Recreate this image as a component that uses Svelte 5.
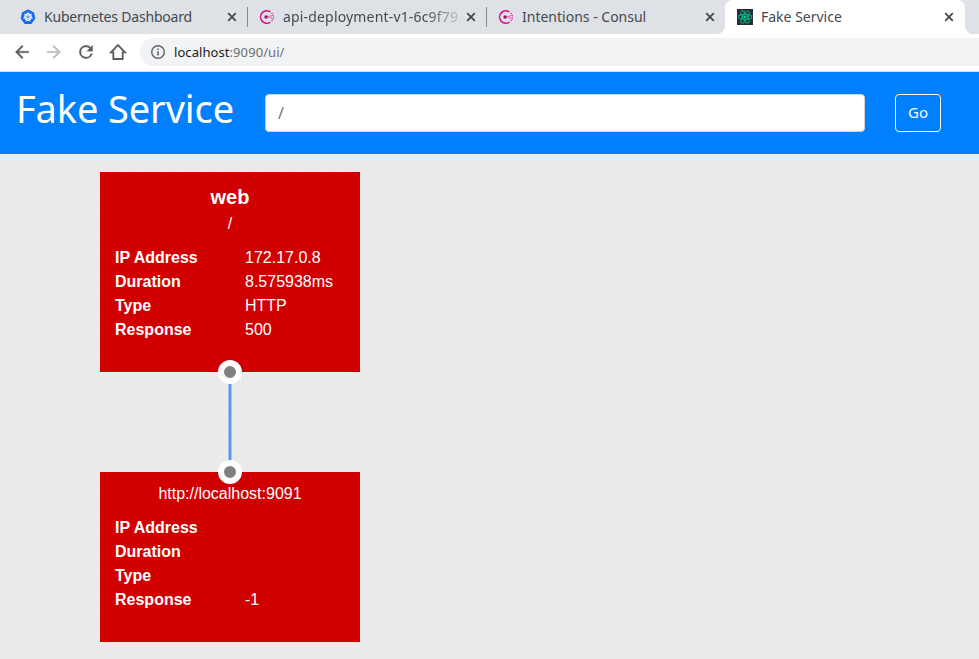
<script>
  const tabs = [
    { title: 'Kubernetes Dashboard', icon: 'kube', spacing: -0.2 },
    { title: 'api-deployment-v1-6c9f79', icon: 'consul', spacing: 0.17, fade: true },
    { title: 'Intentions - Consul', icon: 'consul', spacing: 0 },
    { title: 'Fake Service', icon: 'react', spacing: 0, active: true }
  ];
  const nodes = [
    {
      x: 100, y: 18, height: 200, name: 'web', uri: '/', port: 'bottom',
      rows: [['IP Address', '172.17.0.8'], ['Duration', '8.575938ms'], ['Type', 'HTTP'], ['Response', '500']]
    },
    {
      x: 100, y: 318, height: 170, name: '', uri: 'http://localhost:9091', port: 'top',
      rows: [['IP Address', ''], ['Duration', ''], ['Type', ''], ['Response', '-1']]
    }
  ];
  const spokes = [0, 1, 2, 3, 4, 5, 6].map((i) => (i * 360) / 7);
</script>

<div class="window">
  <div class="tabs">
    {#each tabs as tab}
      <div class="tab" class:active={tab.active}>
        {#if tab.icon === 'kube'}
          <svg class="fav" viewBox="0 0 16 16">
            <path d="M8 1.1 13.4 3.7 14.7 9.4 11 14.3H5L1.3 9.4 2.6 3.7Z" fill="#1769f0" stroke="#1769f0" stroke-width="1.2" stroke-linejoin="round" />
            <circle cx="8" cy="8" r="3.4" fill="#8db5f5" stroke="#fff" stroke-width="1" />
            {#each spokes as a}
              <path d="M8 7.2V3" stroke="#fff" stroke-width=".7" transform="rotate({a} 8 8)" />
            {/each}
            <circle cx="8" cy="8" r=".8" fill="#1769f0" />
          </svg>
        {:else if tab.icon === 'consul'}
          <svg class="fav" viewBox="0.7 0 16 16">
            <path d="M12 13.1A6.2 6.2 0 1 1 12 2.9" fill="none" stroke="#df0f87" stroke-width="1.6" />
            <circle cx="7.8" cy="8" r="1.8" fill="#a0145c" />
            <g fill="#df0f87">
              <circle cx="10.8" cy="8" r=".8" /><circle cx="12.8" cy="6.9" r=".7" /><circle cx="12.8" cy="9.1" r=".7" />
              <circle cx="14.8" cy="6.4" r=".7" /><circle cx="15.1" cy="8" r=".6" /><circle cx="14.8" cy="9.7" r=".7" />
              <circle cx="13.8" cy="4.5" r=".7" /><circle cx="13.8" cy="11.6" r=".7" />
            </g>
          </svg>
        {:else}
          <svg class="fav" viewBox="0 0 16 16">
            <path d="M0 0H16V16H0Z" fill="#282c34" />
            <g fill="none" stroke="#05ab83" stroke-width="1.1">
              <ellipse cx="8" cy="8" rx="6.8" ry="2.6" />
              <ellipse cx="8" cy="8" rx="6.8" ry="2.6" transform="rotate(60 8 8)" />
              <ellipse cx="8" cy="8" rx="6.8" ry="2.6" transform="rotate(120 8 8)" />
            </g>
            <circle cx="8" cy="8" r="1.5" fill="#00cf9a" />
          </svg>
        {/if}
        <span class="title" class:fade={tab.fade} style="letter-spacing:{tab.spacing}px">{tab.title}</span>
        <svg class="close" viewBox="0 0 10 10"><path d="M1.2 1.2 8.8 8.8M8.8 1.2 1.2 8.8" stroke="#45494d" stroke-width="1.8" /></svg>
      </div>
    {/each}
    <div class="rest"></div>
  </div>

  <div class="toolbar">
    <svg viewBox="0 0 24 24" fill="#5a5e63" stroke="#5a5e63" stroke-width=".4"><path d="M20 11H7.83l5.59-5.59L12 4l-8 8 8 8 1.41-1.41L7.83 13H20z" /></svg>
    <svg viewBox="0 0 24 24" fill="#b9bbbe" stroke="#b9bbbe" stroke-width=".4"><path d="m12 4-1.41 1.41L16.17 11H4v2h12.17l-5.58 5.59L12 20l8-8z" /></svg>
    <svg viewBox="0 0 24 24" fill="#5a5e63" stroke="#5a5e63" stroke-width=".4"><path d="M17.65 6.35A7.96 7.96 0 0 0 12 4a8 8 0 1 0 7.73 10h-2.08A6 6 0 1 1 12 6c1.66 0 3.14.69 4.22 1.78L13 11h7V4z" /></svg>
    <svg viewBox="0 0 24 24" fill="none" stroke="#5a5e63" stroke-width="2.2"><path d="M3.6 12.4H6.4V20.4H17.6V12.4H20.4L12 3.8Z" /></svg>
    <div class="address">
      <svg viewBox="0 0 16 16"><circle cx="8" cy="8" r="6.3" fill="none" stroke="#5f6368" stroke-width="1.4" /><path d="M8 7.2V11.5M8 4.5V6" stroke="#5f6368" stroke-width="1.6" /></svg>
      <span class="url"><b>localhost</b>:9090/ui/</span>
    </div>
  </div>

  <header>
    <h1>Fake Service</h1>
    <input value="/" aria-label="Path" />
    <button>Go</button>
  </header>

  <main>
    <svg class="link" viewBox="0 0 4 100"><path d="M2 0V100" stroke="#5c96ec" stroke-width="3" /></svg>
    {#each nodes as node}
      <section class="node" style="left:{node.x}px;top:{node.y}px;height:{node.height}px">
        {#if node.name}<h2>{node.name}</h2>{/if}
        <p>{node.uri}</p>
        <dl>
          {#each node.rows as [label, value]}
            <div><dt>{label}</dt><dd>{value}</dd></div>
          {/each}
        </dl>
        <i class="port {node.port}"></i>
      </section>
    {/each}
  </main>
</div>

<style>
  * { box-sizing: border-box; }
  .window { width: 979px; height: 659px; display: flex; flex-direction: column; overflow: hidden; font-family: 'Noto Sans', sans-serif; }
  .tabs { height: 34px; display: flex; background: #fff; flex: none; }
  .tab { width: 239px; height: 34px; flex: none; display: flex; align-items: center; padding: 0 11px; background: #dee1e6; position: relative; }
  .tab:first-child { width: 248px; padding-left: 20px; }
  .tab:nth-child(3) { width: 238px; padding-right: 10px; border-bottom-right-radius: 8px; }
  .tab:nth-child(1)::after, .tab:nth-child(2)::after { content: ''; position: absolute; right: 0; top: 7px; width: 1px; height: 20px; background: #85888d; }
  .tab.active { width: 240px; padding-left: 12px; background: linear-gradient(#dee1e6 0 10px, #fff 10px); z-index: 0; }
  .tab.active::before { content: ''; position: absolute; inset: 0; z-index: -1; background: #fff; border-radius: 8px 8px 0 0; }
  .rest { flex: 1; background: #dee1e6; border-bottom-left-radius: 8px; }
  .fav { width: 16px; height: 16px; flex: none; }
  .title { flex: 1; margin-left: 8px; font-size: 14px; line-height: 20px; color: #45494d; white-space: nowrap; overflow: hidden; }
  .fade { -webkit-mask: linear-gradient(90deg, #000 142px, transparent 184px); mask: linear-gradient(90deg, #000 142px, transparent 184px); }
  .close { width: 10px; height: 10px; flex: none; margin-left: 8px; }
  .toolbar { height: 38px; flex: none; display: flex; align-items: center; gap: 12px; padding: 0 0 2px 12px; background: #fff; border-bottom: 1px solid #d9dde3; }
  .toolbar > svg { width: 20px; height: 20px; flex: none; }
  .address { flex: 1; height: 28px; border-radius: 14px 0 0 14px; background: #f1f3f4; display: flex; align-items: center; padding-left: 10px; }
  .address svg { width: 16px; height: 16px; }
  .url { margin-left: 8px; font-size: 13px; letter-spacing: .07px; color: #6b6f73; }
  .url b { font-weight: 400; color: #202124; }
  header { height: 82px; flex: none; display: flex; align-items: flex-start; background: #0080ff; padding: 0 0 0 16px; }
  h1 { margin: 7px 0 0; width: 249px; flex: none; font: 400 38px/58px 'Noto Sans', sans-serif; letter-spacing: -.12px; color: #fff; white-space: nowrap; }
  input { width: 600px; height: 38px; margin: 22px 30px 0 0; border: 1px solid #ced4da; border-radius: 4px; padding: 0 12px; font: 16px 'Noto Sans', sans-serif; color: #6c757d; background: #fff; }
  button { width: 46px; height: 38px; margin-top: 22px; border: 1px solid #f8f9fa; border-radius: 4px; padding: 0 0 2px; font: 400 15px 'Noto Sans', sans-serif; color: #f8f9fa; background: transparent; }
  main { flex: 1; position: relative; background: linear-gradient(90deg, #eee 1px, transparent 1px) 0 0 / 20px 20px, linear-gradient(#eee 1px, transparent 1px) 0 18px / 20px 20px, #eaeaea; }
  .link { position: absolute; left: 228px; top: 218px; width: 4px; height: 100px; }
  .node { position: absolute; width: 260px; background: #d00000; color: #fff; font: 16px/24px 'Liberation Sans', Arial, sans-serif; padding: 10px 15px; }
  h2 { margin: 3px 0; font-size: 20px; line-height: 24px; text-align: center; }
  p { margin: 0 0 10px; text-align: center; }
  dl { margin: 0; }
  dl div { display: flex; height: 24px; }
  dt { width: 130px; font-weight: 700; }
  dd { margin: 0; }
  .port { position: absolute; left: 118px; width: 24px; height: 24px; border-radius: 50%; background: #808080; border: 6px solid #fff; }
  .top { top: -12px; }
  .bottom { bottom: -12px; }
</style>
